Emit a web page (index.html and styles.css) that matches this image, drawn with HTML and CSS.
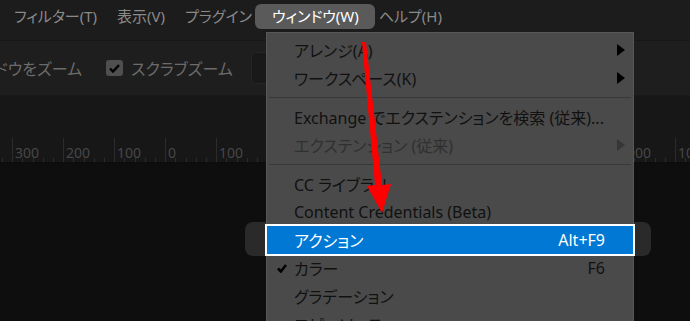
FILE: index.html
```html
<!DOCTYPE html>
<html lang="ja">
<head>
    <meta charset="UTF-8">
    <meta name="viewport" content="width=device-width, initial-scale=1.0">
    <title>ウィンドウ メニュー</title>
    <link rel="stylesheet" href="styles.css">
</head>
<body>
    <div class="app">
        <nav class="menubar">
            <span class="menu-item">フィルター(T)</span>
            <span class="menu-item">表示(V)</span>
            <span class="menu-item">プラグイン</span>
            <span class="menu-item active">ウィンドウ(W)</span>
            <span class="menu-item">ヘルプ(H)</span>
        </nav>

        <div class="toolbar">
            <label class="tool-option clipped">
                <span class="checkbox"></span>
                <span>すべてのウィンドウをズーム</span>
            </label>
            <label class="tool-option">
                <span class="checkbox checked">
                    <svg width="11" height="9" viewBox="0 0 11 9"><path d="M1 4.5 L4 7.5 L10 1.2" fill="none" stroke="#000" stroke-width="2.4"/></svg>
                </span>
                <span>スクラブズーム</span>
            </label>
            <div class="zoom-field"></div>
        </div>

        <div class="tabs"></div>

        <div class="ruler">
            <span>300</span><span>200</span><span>100</span><span>0</span><span>100</span>
            <span>200</span><span>300</span><span>400</span><span>500</span><span>600</span>
            <span>700</span><span>800</span><span>900</span><span>1000</span>
        </div>

        <div class="canvas">
            <div class="task-bar"></div>
        </div>

        <!-- ウィンドウ メニュー -->
        <div class="dropdown">
            <div class="dd-item"><span></span><span>アレンジ(A)</span><span></span><span class="sub"></span></div>
            <div class="dd-item"><span></span><span>ワークスペース(K)</span><span></span><span class="sub"></span></div>
            <div class="dd-sep"></div>
            <div class="dd-item"><span></span><span>Exchange でエクステンションを検索 (従来)...</span><span></span><span></span></div>
            <div class="dd-item disabled"><span></span><span>エクステンション (従来)</span><span></span><span class="sub"></span></div>
            <div class="dd-sep"></div>
            <div class="dd-item"><span></span><span>CC ライブラリ</span><span></span><span></span></div>
            <div class="dd-item"><span></span><span>Content Credentials (Beta)</span><span></span><span></span></div>
            <div class="dd-item selected"><span></span><span>アクション</span><span class="key">Alt+F9</span><span></span></div>
            <div class="dd-item">
                <span class="check"><svg width="10" height="9" viewBox="0 0 10 9"><path d="M1 4.5 L3.8 7.5 L9 1" fill="none" stroke="#000" stroke-width="2.6"/></svg></span>
                <span>カラー</span><span class="key">F6</span><span></span>
            </div>
            <div class="dd-item"><span></span><span>グラデーション</span><span></span><span></span></div>
            <div class="dd-item"><span></span><span>コピーソース</span><span></span><span></span></div>
        </div>

        <svg class="annotation" width="690" height="321" viewBox="0 0 690 321">
            <polygon points="362,42 366,42 382,185 391,184 382,213 367,186 375,185" fill="#ff0000"/>
        </svg>
    </div>
</body>
</html>
```

FILE: styles.css
```css
body {
    margin: 0;
    background-color: #0e0e0e;
    font-family: "Noto Sans", "Noto Sans CJK JP", sans-serif;
    font-size: 16px;
    font-feature-settings: "palt";
    overflow: hidden;
}
.app {
    position: relative;
    width: 690px;
    height: 321px;
    display: flex;
    flex-direction: column;
    overflow: hidden;
}
.menubar {
    height: 41px;
    box-sizing: border-box;
    background-color: #1c1c1c;
    border-bottom: 1px solid #171717;
    display: flex;
    align-items: flex-start;
    padding: 4px 0 0 4px;
    font-size: 15px;
}
.menu-item {
    height: 25px;
    line-height: 25px;
    padding: 0 10px;
    color: #8a8a8a;
    white-space: nowrap;
}
.menu-item.active {
    position: relative;
    background-color: #5a5a5a;
    color: #fff;
    border-radius: 6px;
    padding: 0 16px 0 17px;
    margin: 0 -6px 0 -7px;
}
.toolbar {
    height: 55px;
    box-sizing: border-box;
    background-color: #1e1e1e;
    border-bottom: 1px solid #191919;
    display: flex;
    align-items: center;
    gap: 24px;
    white-space: nowrap;
}
.tool-option {
    display: flex;
    align-items: center;
    gap: 8px;
    color: #6b6b6b;
}
.tool-option.clipped {
    margin-left: -130px;
}
.checkbox {
    width: 17px;
    height: 16px;
    border-radius: 3px;
    background-color: #4f4f4f;
    display: flex;
    align-items: center;
    justify-content: center;
}
.zoom-field {
    width: 120px;
    height: 32px;
    margin-left: -6px;
    box-sizing: border-box;
    background-color: #191919;
    border: 1px solid #252525;
    border-radius: 4px;
}
.tabs {
    height: 42px;
    background-color: #171717;
}
.ruler {
    height: 25px;
    box-sizing: border-box;
    background-color: #171717;
    background-image: repeating-linear-gradient(to right, #2c2c2c 0, #2c2c2c 1px, transparent 1px, transparent 10.2px);
    background-size: 100% 4px;
    background-position: 1.7px bottom;
    background-repeat: no-repeat;
    border-bottom: 1px solid #0c0c0c;
    display: flex;
    padding-left: 12px;
}
.ruler span {
    flex: none;
    width: 51px;
    box-sizing: border-box;
    border-left: 1px solid #2c2c2c;
    padding: 7px 0 0 2px;
    font-size: 14px;
    line-height: 16px;
    color: #474747;
    font-feature-settings: normal;
}
.canvas {
    flex: 1;
    position: relative;
    background-color: #0e0e0e;
}
.task-bar {
    position: absolute;
    left: 245px;
    top: 59px;
    width: 406px;
    height: 34px;
    background-color: #2a2a2a;
    border-radius: 8px;
}
.dropdown {
    position: absolute;
    left: 266px;
    top: 32px;
    width: 368px;
    height: 300px;
    box-sizing: border-box;
    background-color: #4a4a4a;
    border: 1px solid #575757;
    padding-top: 3px;
}
.dd-item {
    display: grid;
    grid-template-columns: 27px 1fr auto 28px;
    align-items: center;
    height: 28px;
    color: #111;
    white-space: nowrap;
}
.dd-item.disabled {
    color: #303030;
}
.dd-item.selected {
    background-color: #0078d4;
    color: #fff;
    outline: 2px solid #fff;
}
.dd-item .check {
    display: flex;
    justify-content: center;
    padding-left: 2px;
}
.dd-item .sub {
    justify-self: center;
    margin-left: 3px;
    width: 0;
    height: 0;
    border-top: 6.5px solid transparent;
    border-bottom: 6.5px solid transparent;
    border-left: 8px solid #000;
}
.dd-item.disabled .sub {
    border-left-color: #363636;
}
.dd-sep {
    height: 1px;
    margin: 5px 2px;
    background-color: #383838;
}
.annotation {
    position: absolute;
    left: 0;
    top: 0;
    pointer-events: none;
}
```
